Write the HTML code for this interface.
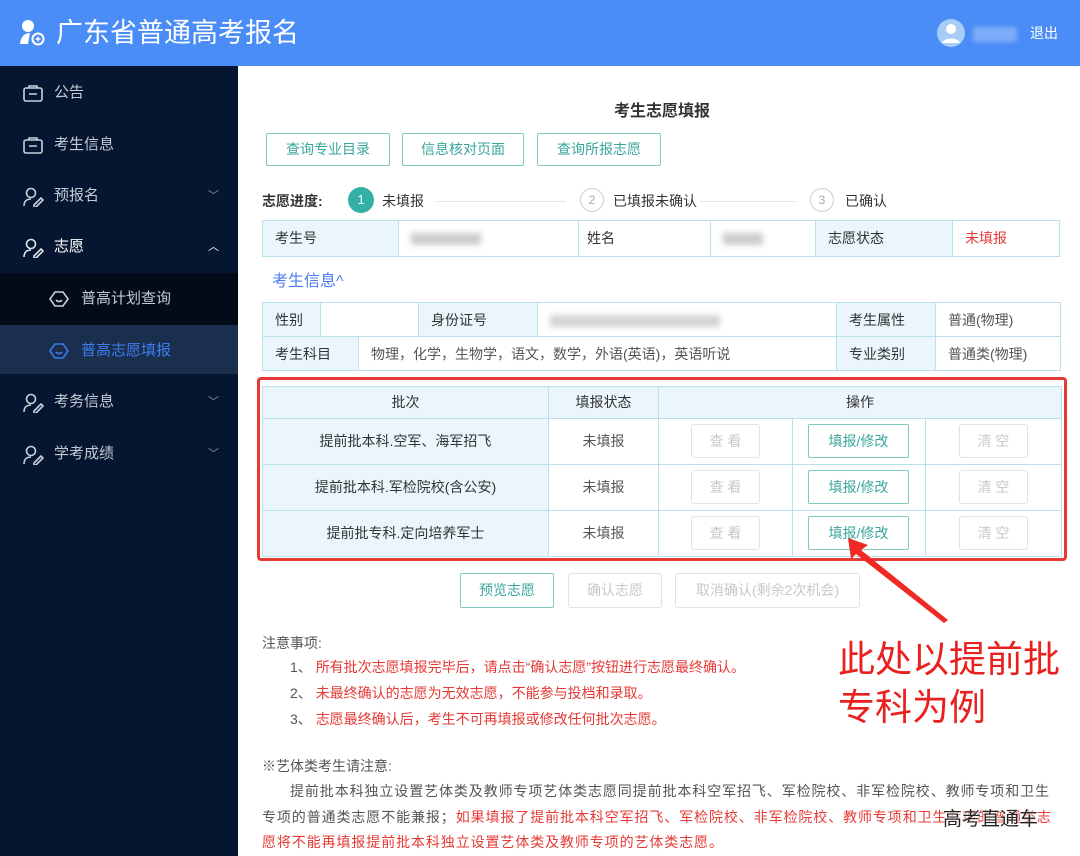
<!DOCTYPE html>
<html><head><meta charset="utf-8"><style>
*{margin:0;padding:0;box-sizing:border-box}
body{width:1080px;height:856px;position:relative;overflow:hidden;background:#fff;font-family:"Liberation Sans","Noto Sans CJK SC",sans-serif;font-size:14px;color:#333}
.a{position:absolute}
#hd{left:0;top:0;width:1080px;height:66px;background:#4a8df6}
#sb{left:0;top:66px;width:238px;height:790px;background:#071630}
.mi{position:absolute;left:0;width:238px;height:50px;color:#c2cad6;font-size:15px;line-height:50px;padding-left:54px}
.mi svg{position:absolute;left:23px;top:16px}
.chev{position:absolute;left:208px;top:0;font-size:11px;color:#8a94a3}
.btn{position:absolute;border:1px solid #7fcbc2;color:#3aa69b;text-align:center;border-radius:2px;background:#fff}
.gbtn{position:absolute;border:1px solid #e2e2e2;color:#c8c8c8;text-align:center;border-radius:3px;background:#fff}
.c{position:absolute;border:1px solid #b9e1ea;line-height:34px;padding-left:12px;color:#333}
.lb{background:#eaf6fc}
.red{color:#e53935}
.n{position:absolute;font-size:14px;line-height:20px}
</style></head><body>
<div id="hd" class="a">
 <svg class="a" style="left:18px;top:18px" width="30" height="30" viewBox="0 0 30 30"><circle cx="10" cy="8" r="6" fill="#fff"/><path d="M2 26 C3 17 8 15 12 15 L10 26Z" fill="#fff"/><circle cx="20" cy="21" r="6.5" fill="#fff"/><circle cx="20" cy="21" r="4.5" fill="#4a8df6"/><path d="M17.5 21h5M20 18.5v5" stroke="#fff" stroke-width="1.5"/></svg>
 <div class="a" style="left:56px;top:14px;font-size:27px;color:#fff;line-height:38px">广东省普通高考报名</div>
 <svg class="a" style="left:937px;top:19px" width="28" height="28" viewBox="0 0 28 28"><circle cx="14" cy="14" r="14" fill="#a9cdf9"/><circle cx="14" cy="10" r="5" fill="#fff"/><path d="M5 24c2-6 16-6 18 0z" fill="#fff"/></svg>
 <div class="a" style="left:973px;top:27px;width:44px;height:15px;background:#7eacf8;border-radius:3px;filter:blur(2px)"></div>
 <div class="a" style="left:1030px;top:23px;color:#fff;font-size:14px">退出</div>
</div>
<div id="sb" class="a">
 <div class="mi" style="top:2px"><svg width="20" height="18" viewBox="0 0 20 18" fill="none" stroke="#c9d1dc" stroke-width="1.6"><rect x="1" y="4" width="18" height="13" rx="2"/><path d="M6 4V2h8v2M6 10h8"/></svg>公告</div>
 <div class="mi" style="top:54px"><svg width="20" height="18" viewBox="0 0 20 18" fill="none" stroke="#c9d1dc" stroke-width="1.6"><rect x="1" y="4" width="18" height="13" rx="2"/><path d="M6 4V2h8v2M6 10h8"/></svg>考生信息</div>
 <div class="mi" style="top:105px"><svg width="22" height="20" viewBox="0 0 22 20" fill="none" stroke="#c9d1dc" stroke-width="1.6"><circle cx="8" cy="6" r="4.5"/><path d="M1 19c0-5 3-7 7-7M11 18l7-7 2 2-7 7h-2z"/></svg>预报名<span class="chev">﹀</span></div>
 <div class="mi" style="top:156px;color:#fff"><svg width="22" height="20" viewBox="0 0 22 20" fill="none" stroke="#e0e6ee" stroke-width="1.6"><circle cx="8" cy="6" r="4.5"/><path d="M1 19c0-5 3-7 7-7M11 18l7-7 2 2-7 7h-2z"/></svg>志愿<span class="chev" style="color:#fff">︿</span></div>
 <div class="a" style="left:0;top:207px;width:238px;height:52px;background:#030b18"></div>
 <div class="mi" style="top:208px;padding-left:81px"><svg style="left:49px" width="20" height="18" viewBox="0 0 20 18" fill="none" stroke="#c9d1dc" stroke-width="1.6"><path d="M1 9L6 2h8l5 7-5 7H6z"/><path d="M7 10c1.5 2 4.5 2 6 0"/></svg>普高计划查询</div>
 <div class="a" style="left:0;top:259px;width:238px;height:49px;background:#1a2e4d"></div>
 <div class="mi" style="top:260px;padding-left:81px;color:#3d7cf0"><svg style="left:49px" width="20" height="18" viewBox="0 0 20 18" fill="none" stroke="#3d7cf0" stroke-width="1.6"><path d="M1 9L6 2h8l5 7-5 7H6z"/><path d="M7 10c1.5 2 4.5 2 6 0"/></svg>普高志愿填报</div>
 <div class="mi" style="top:311px"><svg width="22" height="20" viewBox="0 0 22 20" fill="none" stroke="#c9d1dc" stroke-width="1.6"><circle cx="8" cy="6" r="4.5"/><path d="M1 19c0-5 3-7 7-7M11 18l7-7 2 2-7 7h-2z"/></svg>考务信息<span class="chev">﹀</span></div>
 <div class="mi" style="top:363px"><svg width="22" height="20" viewBox="0 0 22 20" fill="none" stroke="#c9d1dc" stroke-width="1.6"><circle cx="8" cy="6" r="4.5"/><path d="M1 19c0-5 3-7 7-7M11 18l7-7 2 2-7 7h-2z"/></svg>学考成绩<span class="chev">﹀</span></div>
</div>

<div class="a" style="left:560px;top:97px;width:204px;text-align:center;font-size:16px;font-weight:bold;color:#333">考生志愿填报</div>
<div class="btn" style="left:266px;top:133px;width:124px;height:33px;line-height:31px">查询专业目录</div>
<div class="btn" style="left:402px;top:133px;width:122px;height:33px;line-height:31px">信息核对页面</div>
<div class="btn" style="left:537px;top:133px;width:124px;height:33px;line-height:31px">查询所报志愿</div>

<div class="a" style="left:262px;top:191px;font-weight:bold;color:#333">志愿进度:</div>
<div class="a" style="left:348px;top:187px;width:26px;height:26px;border-radius:50%;background:#34b0a7;color:#fff;text-align:center;line-height:26px;font-size:13px">1</div>
<div class="a" style="left:382px;top:191px">未填报</div>
<div class="a" style="left:436px;top:201px;width:130px;height:1px;background:#e4e4e4"></div>
<div class="a" style="left:580px;top:188px;width:24px;height:24px;border-radius:50%;border:1px solid #ccc;color:#aaa;text-align:center;line-height:22px;font-size:12px">2</div>
<div class="a" style="left:613px;top:191px">已填报未确认</div>
<div class="a" style="left:700px;top:201px;width:96px;height:1px;background:#e4e4e4"></div>
<div class="a" style="left:810px;top:188px;width:24px;height:24px;border-radius:50%;border:1px solid #ccc;color:#aaa;text-align:center;line-height:22px;font-size:12px">3</div>
<div class="a" style="left:845px;top:191px">已确认</div>

<div class="c lb" style="left:262px;top:220px;width:137px;height:37px">考生号</div>
<div class="c" style="left:398px;top:220px;width:181px;height:37px"><span style="display:inline-block;width:70px;height:12px;background:#ccc;filter:blur(3px);vertical-align:middle"></span></div>
<div class="c" style="left:578px;top:220px;width:133px;height:37px;padding-left:8px">姓名</div>
<div class="c" style="left:710px;top:220px;width:106px;height:37px"><span style="display:inline-block;width:40px;height:12px;background:#ccc;filter:blur(3px);vertical-align:middle"></span></div>
<div class="c lb" style="left:815px;top:220px;width:138px;height:37px">志愿状态</div>
<div class="c red" style="left:952px;top:220px;width:108px;height:37px">未填报</div>

<div class="a" style="left:272px;top:267px;font-size:16px;color:#4b7cf0">考生信息^</div>

<div class="c lb" style="left:262px;top:302px;width:59px;height:35px">性别</div>
<div class="c" style="left:320px;top:302px;width:99px;height:35px"></div>
<div class="c lb" style="left:418px;top:302px;width:120px;height:35px">身份证号</div>
<div class="c" style="left:537px;top:302px;width:300px;height:35px"><span style="display:inline-block;width:170px;height:12px;background:#d4d4d4;filter:blur(3px);vertical-align:middle"></span></div>
<div class="c lb" style="left:836px;top:302px;width:100px;height:35px">考生属性</div>
<div class="c" style="left:935px;top:302px;width:126px;height:35px;color:#555">普通(物理)</div>
<div class="c lb" style="left:262px;top:336px;width:97px;height:35px">考生科目</div>
<div class="c" style="left:358px;top:336px;width:479px;height:35px;color:#555">物理，化学，生物学，语文，数学，外语(英语)，英语听说</div>
<div class="c lb" style="left:836px;top:336px;width:100px;height:35px">专业类别</div>
<div class="c" style="left:935px;top:336px;width:126px;height:35px;color:#555">普通类(物理)</div>

<div class="a" style="left:262px;top:386px;width:800px;height:170px;background:#fff"></div>
<div class="c lb" style="left:262px;top:386px;width:287px;height:33px;text-align:center;padding:0;line-height:31px">批次</div>
<div class="c lb" style="left:548px;top:386px;width:111px;height:33px;text-align:center;padding:0;line-height:31px">填报状态</div>
<div class="c lb" style="left:658px;top:386px;width:404px;height:33px;text-align:center;padding:0;line-height:31px">操作</div>
<div class="c lb" style="left:262px;top:418px;width:287px;height:47px;text-align:center;padding:0;line-height:45px">提前批本科.空军、海军招飞</div>
<div class="c lb" style="left:262px;top:464px;width:287px;height:47px;text-align:center;padding:0;line-height:45px">提前批本科.军检院校(含公安)</div>
<div class="c lb" style="left:262px;top:510px;width:287px;height:47px;text-align:center;padding:0;line-height:45px">提前批专科.定向培养军士</div>
<div class="c" style="left:548px;top:418px;width:111px;height:47px;text-align:center;padding:0;line-height:45px;color:#555">未填报</div>
<div class="c" style="left:548px;top:464px;width:111px;height:47px;text-align:center;padding:0;line-height:45px;color:#555">未填报</div>
<div class="c" style="left:548px;top:510px;width:111px;height:47px;text-align:center;padding:0;line-height:45px;color:#555">未填报</div>
<div class="c" style="left:658px;top:418px;width:135px;height:139px"></div>
<div class="c" style="left:792px;top:418px;width:134px;height:139px"></div>
<div class="c" style="left:925px;top:418px;width:137px;height:139px"></div>
<div class="a" style="left:658px;top:464px;width:404px;height:1px;background:#b9e1ea"></div>
<div class="a" style="left:658px;top:510px;width:404px;height:1px;background:#b9e1ea"></div>

<div class="gbtn" style="left:691px;top:424px;width:69px;height:34px;line-height:32px">查 看</div>
<div class="gbtn" style="left:691px;top:470px;width:69px;height:34px;line-height:32px">查 看</div>
<div class="gbtn" style="left:691px;top:516px;width:69px;height:34px;line-height:32px">查 看</div>
<div class="btn" style="left:808px;top:424px;width:101px;height:34px;line-height:32px">填报/修改</div>
<div class="btn" style="left:808px;top:470px;width:101px;height:34px;line-height:32px">填报/修改</div>
<div class="btn" style="left:808px;top:516px;width:101px;height:34px;line-height:32px">填报/修改</div>
<div class="gbtn" style="left:959px;top:424px;width:69px;height:34px;line-height:32px">清 空</div>
<div class="gbtn" style="left:959px;top:470px;width:69px;height:34px;line-height:32px">清 空</div>
<div class="gbtn" style="left:959px;top:516px;width:69px;height:34px;line-height:32px">清 空</div>

<div class="a" style="left:257px;top:377px;width:810px;height:184px;border:3px solid #e53a35;border-radius:4px"></div>

<div class="btn" style="left:460px;top:573px;width:94px;height:35px;line-height:33px">预览志愿</div>
<div class="gbtn" style="left:568px;top:573px;width:94px;height:35px;line-height:33px">确认志愿</div>
<div class="gbtn" style="left:675px;top:573px;width:185px;height:35px;line-height:33px">取消确认(剩余2次机会)</div>

<div class="n" style="left:262px;top:633px;color:#555">注意事项:</div>
<div class="n" style="left:290px;top:657px;color:#555">1、 <span class="red">所有批次志愿填报完毕后，请点击“确认志愿”按钮进行志愿最终确认。</span></div>
<div class="n" style="left:290px;top:683px;color:#555">2、 <span class="red">未最终确认的志愿为无效志愿，不能参与投档和录取。</span></div>
<div class="n" style="left:290px;top:709px;color:#555">3、 <span class="red">志愿最终确认后，考生不可再填报或修改任何批次志愿。</span></div>
<div class="n" style="left:262px;top:756px;color:#555">※艺体类考生请注意:</div>
<div class="n" style="left:262px;top:779px;width:802px;line-height:25.5px;color:#555;text-indent:28px;letter-spacing:0.9px">提前批本科独立设置艺体类及教师专项艺体类志愿同提前批本科空军招飞、军检院校、非军检院校、教师专项和卫生专项的普通类志愿不能兼报；<span class="red">如果填报了提前批本科空军招飞、军检院校、非军检院校、教师专项和卫生专项的普通类志愿将不能再填报提前批本科独立设置艺体类及教师专项的艺体类志愿。</span></div>

<div class="a" style="left:838px;top:636px;font-size:37px;line-height:48px;color:#e8201e">此处以提前批<br>专科为例</div>
<svg class="a" style="left:0;top:0" width="1080" height="856"><path d="M848 538 L868 545 L861 550 L948 620 L944 623 L856 554 L851 559Z" fill="#ef2a24"/></svg>
<div class="a" style="left:943px;top:804px;font-size:19px;color:#222;text-shadow:0 0 2px #fff,0 0 2px #fff">高考直通车</div>
</body></html>
